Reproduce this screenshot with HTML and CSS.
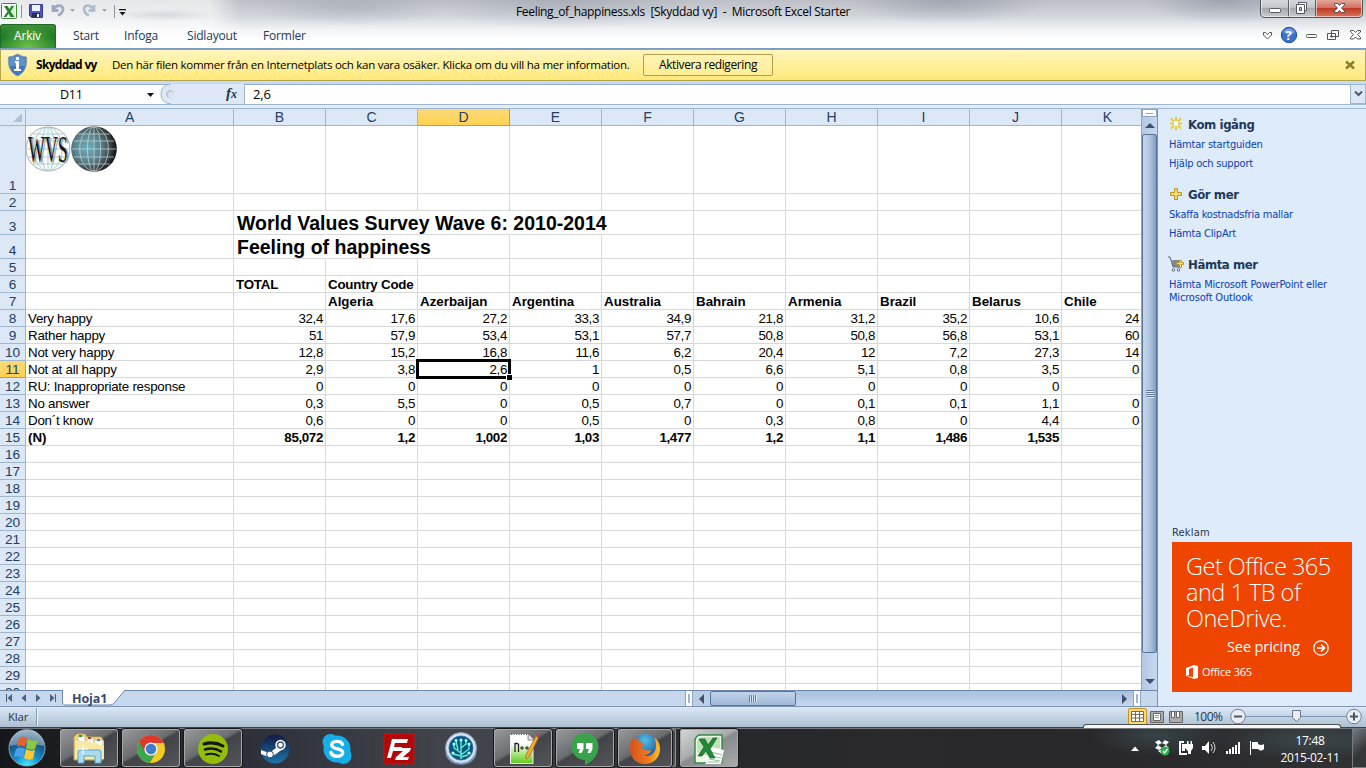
FILE: index.html
```html
<!DOCTYPE html>
<html lang="sv">
<head>
<meta charset="utf-8">
<title>Feeling_of_happiness.xls</title>
<link rel="stylesheet" href="styles.css">
</head>
<body>
<div class="app">
  <header class="chrome">
    <div class="titlebar">
      <svg class="quick" width="130" height="24" viewBox="0 0 130 24">
        <rect x="1.500" y="3.500" width="15" height="15" rx="1" fill="#fff" stroke="#3c8a3a"/><path d="M10 5h5v12h-5z" fill="#d9edd5"/><path d="M4 6h3.500l2 3 2-3h2.500l-3.500 5.500 4 5.500h-4l-2-3.500L6.500 17h-3l4-5.500z" fill="#25852f"/>
        <path d="M21.500 5v13M114.500 5v13" stroke="#8e949c"/>
        <path d="M29.500 4.500h13v13h-11l-2-2z" fill="#4a56b8" stroke="#353c93"/><path d="M32 5h8v6h-8z" fill="#eef2fc"/><path d="M32 13h8v4h-8z" fill="#272c58"/><path d="M37 14h2v3h-2z" fill="#fff"/>
        <path d="M53 5v5.500h5.500M54 9.500c2-5 9-5 9-.5 0 3-2 5-5 6.500" fill="none" stroke="#9dabc2" stroke-width="2.800"/>
        <path d="M94 5v5.500h-5.500M93 9.500c-2-5-9-5-9-.5 0 3 2 5 5 6.500" fill="none" stroke="#b0bccd" stroke-width="2.800"/>
        <path d="M70 9h5l-2.500 3zM102 9h5l-2.500 3z" fill="#a2a8b0"/>
        <path d="M119 9h7v1.200h-7zM119.500 12h6l-3 3.500z" fill="#111"/>
      </svg>
      <div class="title">Feeling_of_happiness.xls&nbsp; [Skyddad vy]&nbsp; -&nbsp; Microsoft Excel Starter</div>
      <svg class="winbtns" width="104" height="19" viewBox="0 0 104 19">
        <defs><linearGradient id="wb" x1="0" y1="0" x2="0" y2="1"><stop offset="0" stop-color="#d6d9dd"/><stop offset=".45" stop-color="#c3c6ca"/><stop offset=".5" stop-color="#a5a8ad"/><stop offset="1" stop-color="#c9ccd0"/></linearGradient>
        <linearGradient id="wr" x1="0" y1="0" x2="0" y2="1"><stop offset="0" stop-color="#e3a79b"/><stop offset=".45" stop-color="#d3705e"/><stop offset=".5" stop-color="#be3a25"/><stop offset="1" stop-color="#d9755c"/></linearGradient></defs>
        <path d="M.5-1v14q0 4.500 4.500 4.500h93q4.500 0 4.500-4.500v-14z" fill="url(#wb)" stroke="#50545a"/>
        <path d="M55.500 0h46.500v13q0 4-4 4H55.500z" fill="url(#wr)"/>
        <path d="M28.500 0v17M55.500 0v17" stroke="#5b5f66"/><path d="M1.500 0v13q0 3.500 3.500 3.500h93q3.500 0 3.500-3.500V0M29.500 0v16M56.500 0v16" fill="none" stroke="#fff" opacity=".55"/>
        <rect x="9.500" y="8.500" width="11" height="4" rx="1" fill="#fff" stroke="#555a62"/>
        <path d="M38.500 2.500h8v8h-8z" fill="#fff" stroke="#555a62"/><path d="M36.500 4.500h8v9h-8z" fill="#fff" stroke="#555a62"/><path d="M39.500 7.500h2v3h-2z" fill="#bbb" stroke="#555a62"/>
        <path d="M74.500 3.500h3l2 2 2-2h3v1.500l-3 3 3 3v1.500h-3l-2-2-2 2h-3V11l3-3-3-3z" fill="#fff" stroke="#594a50"/>
      </svg>
    </div>
    <nav class="tabs">
      <span class="tab file">Arkiv</span><span class="tab t1">Start</span><span class="tab t2">Infoga</span><span class="tab t3">Sidlayout</span><span class="tab t4">Formler</span>
      <svg class="mdi" width="104" height="22" viewBox="0 0 104 22">
        <path d="M2.500 8.500h2l2 2 2-2h2V11l-4 4-4-4z" fill="#fff" stroke="#555"/>
        <circle cx="28" cy="11" r="7.700" fill="#3c72cf" stroke="#244f9e"/><path d="M22 8a7 7 0 0 1 12 0q-5 5-12 0" fill="#739be2"/><text x="24.600" y="16" class="qmark">?</text>
        <rect x="45.500" y="10.500" width="10" height="3" rx="1" fill="#fff" stroke="#555"/>
        <path d="M70.500 6.500h7v6h-7zM66.500 9.500h8v6h-8z" fill="#fff" stroke="#555"/><path d="M69.500 12h2v1h-2z" fill="none" stroke="#555"/>
        <path d="M89.500 6.500h3l2 2 2-2h3v1.500l-3 2.500 3 3v1.500h-3l-2-2-2 2h-3V13.500l3-3-3-2.500z" fill="#fff" stroke="#555"/>
      </svg>
    </nav>
  </header>

  <section class="notice">
    <svg width="21" height="26" viewBox="0 0 21 26"><path d="M10.500 2q5 3 9 3c1 9-2 16-9 19-7-3-10-10-9-19q4 0 9-3z" fill="#3e78be" stroke="#8e9fae"/><path d="M10.500 3q4 2.500 8 3c.5 4 0 6-.6 8h-15C2 12 2 10 2.500 6q4-.5 8-3" fill="#5e90ca"/><path d="M8 9h4v8h2v2H7v-2h2v-6H8zM9 5h3v3H9z" fill="#fff"/></svg>
    <b>Skyddad vy</b>
    <span class="msg">Den här filen kommer från en Internetplats och kan vara osäker. Klicka om du vill ha mer information.</span>
    <span class="enable">Aktivera redigering</span>
    <svg class="nx" width="10" height="10" viewBox="0 0 10 10"><path d="M1 1.500l8 7M9 1.500l-8 7" stroke="#8c7c22" stroke-width="2.400"/></svg>
  </section>

  <section class="formula">
    <div class="namebox"><span>D11</span><svg width="7" height="4"><path d="M0 0h7L3.500 4z" fill="#111"/></svg></div>
    <div class="fxwrap"><svg width="84" height="20" viewBox="0 0 84 20"><path d="M84 0H11Q1 1 1 10t10 10h73z" fill="#dce8f6"/><path d="M11 0Q1 1 1 10t10 10" fill="none" stroke="#9fb4cf"/><circle cx="10" cy="10" r="4" fill="#bcc8d6"/><circle cx="11" cy="11" r="3" fill="#dde5ee"/><text x="66" y="14" class="fx">f</text><text x="71" y="14" class="fx small">x</text></svg></div>
    <div class="fval">2,6</div>
    <div class="fexp"><svg width="9" height="8"><path d="M1 1.500l3.500 3.500L8 1.500" fill="none" stroke="#4b5a70" stroke-width="2"/></svg></div>
  </section>
  <div class="gap"></div>

  <main class="work">
    <div class="left">
      <div class="sheetrow">
        <div class="sheet" id="sheet"></div>
        <div class="vscroll"><i class="split"></i><i class="up"></i><i class="thumb"><b></b></i><i class="down"></i></div>
      </div>
      <div class="bottom">
        <div class="nav"><svg width="62" height="15" viewBox="0 0 62 15"><g fill="#4b6080"><path d="M6 3h1v8H6zM12 3v8L7.500 7zM26 3v8l-4.500-4zM36 3v8l4.500-4zM50 3v8l4.500-4zM55 3h1v8h-1z"/></g></svg></div>
        <div class="stab"><svg width="64" height="16" viewBox="0 0 64 16"><path d="M.5 0v13l2 2H48q3 0 5-3L63 0" fill="#fff" stroke="#6d87aa"/><path d="M1 0h61" stroke="#fff"/></svg><span>Hoja1</span></div>
        <i class="hsplit"></i>
        <i class="hl"></i><i class="hthumb"><b></b></i><i class="htrack"></i><i class="hr"></i><i class="hsplit"></i><i class="corner"></i>
      </div>
    </div>
    <aside class="pane">
      <h3><svg width="14" height="14" viewBox="0 0 14 14"><path d="M7 0v4M7 9v4M1 6.500h4M9 6.500h4M2 1.500l3 3M12 1.500l-3 3M2 11.500l3-3M12 11.500l-3-3" stroke="#e3cf35" stroke-width="2"/><circle cx="7" cy="6.500" r="2" fill="#fff"/></svg>Kom igång</h3>
      <a>Hämtar startguiden</a><a>Hjälp och support</a>
      <h3><svg width="14" height="14" viewBox="0 0 14 14"><path d="M5.500 1.500h3v4h4v3h-4v4h-3v-4h-4v-3h4z" fill="#f6da63" stroke="#b8942f"/></svg>Gör mer</h3>
      <a>Skaffa kostnadsfria mallar</a><a>Hämta ClipArt</a>
      <h3><svg width="16" height="16" viewBox="0 0 16 16" class="cart"><path d="M0 1h2l3 10h7M3 5h8M4 7h7M4 9h7M6 4v7M8 4v7M10 4v7" fill="none" stroke="#596879"/><circle cx="5.500" cy="14" r="1.300" fill="#fff" stroke="#596879"/><circle cx="10.500" cy="14" r="1.300" fill="#fff" stroke="#596879"/><path d="M11.500 4.500h2v2h2v2h-2v3h-2v-3h-3v-2h3z" fill="#f6da63" stroke="#b8942f"/></svg>Hämta mer</h3>
      <a class="two">Hämta Microsoft PowerPoint eller<br>Microsoft Outlook</a>
      <div class="reklam">Reklam</div>
      <div class="ad">
        <p>Get Office 365<br>and 1 TB of<br>OneDrive.</p>
        <div class="see"><span>See pricing</span><svg width="16" height="16" viewBox="0 0 16 16"><circle cx="8" cy="8" r="7.200" fill="none" stroke="#fff" stroke-width="1.300"/><path d="M4 8h7M8 4.500L11.500 8 8 11.500" fill="none" stroke="#fff" stroke-width="1.700"/></svg></div>
        <div class="off"><svg width="12" height="14" viewBox="0 0 12 14"><path d="M0 3l8-3 4 1v12l-4 1-8-3 7 1V2.500L3 4v6l-3 1z" fill="#fff"/></svg><span>Office 365</span></div>
      </div>
    </aside>
  </main>

  <footer class="status">
    <span class="klar">Klar</span><i class="sep"></i>
    <div class="views">
      <span class="v on"><svg width="13" height="11"><path d="M.5.500h12v10H.500zM.5 3.500h12M.5 7h12M4.500 0v11M8.500 0v11" fill="#fff" stroke="#756a55"/></svg></span>
      <span class="v"><svg width="14" height="12"><path d="M.5.500h13v11H.500z" fill="#aaa" stroke="#666"/><path d="M3.500 2.500h7v7h-7z" fill="#fff" stroke="#666"/><path d="M5 4.500h4M5 6.500h4" stroke="#999"/></svg></span>
      <span class="v"><svg width="14" height="12"><path d="M.5.500h13v11H.500z" fill="#aaa" stroke="#666"/><path d="M2.500.500h3v6h-3zM7.500.500h3v6h-3z" fill="#fff" stroke="#666"/></svg></span>
    </div>
    <span class="pct">100%</span>
    <svg class="zoom" width="136" height="20" viewBox="0 0 136 20"><path d="M17 9.500h103" stroke="#7d93b2"/><g fill="#e8edf4" stroke="#717d8d"><circle cx="10" cy="9.500" r="7.300"/><circle cx="126" cy="9.500" r="7.300"/></g><path d="M6 9.500h8M122 9.500h8M126 5.500v8" stroke="#4e5661" stroke-width="2"/><path d="M64.500 3.500h8v7l-4 4-4-4z" fill="#e9eef5" stroke="#67778c"/></svg>
    <i class="tipedge"></i>
  </footer>

  <footer class="taskbar">
    <div class="slot start"><svg width="40" height="40" viewBox="0 0 40 40"><defs><radialGradient id="orb" cx=".5" cy="1" r=".95"><stop offset="0" stop-color="#4ff0ff"/><stop offset=".35" stop-color="#1594d2"/><stop offset=".75" stop-color="#184f80"/><stop offset="1" stop-color="#6f8fa8"/></radialGradient></defs><circle cx="20" cy="20" r="18" fill="url(#orb)" stroke="#8ea3b1"/><path d="M3 18a17 17 0 0 1 34 0q-17-5-34 0" fill="#c9dbe6" opacity=".45"/><path d="M12 10q4-3 8 0l-2 9q-4-3-8 0z" fill="#e8602a"/><path d="M21 11q4 3 10 1l-3 9q-5 2-9-1z" fill="#8dc63f"/><path d="M9 21q5-3 9 0l-2 9q-5-3-9-1z" fill="#4aa3e6"/><path d="M19 21q4 3 9 1l-2 9q-5 2-9-1z" fill="#fbc832"/></svg></div>
    <div class="slot open"><svg width="36" height="34" viewBox="0 0 36 34"><path d="M3 5l3-3h8l2 3h14l2 3v20H3z" fill="#edd98e" stroke="#c3a54c"/><path d="M4 9h29v18H4z" fill="#f8e9a6"/><path d="M7 9V4h7v5M16 9V6h7v5M23 10V8h9v6" fill="#fff" stroke="#d7bf70"/><path d="M8 3h3v2H8z" fill="#19a03b"/><path d="M17 5h3v2h-3z" fill="#d8382b"/><path d="M26 7h3v2h-3z" fill="#3a8bd8"/><path d="M7 31V20q0-2 2-2h19q2 0 2 2v11h-6v-7H13v7z" fill="#a9dcf3" stroke="#5aa0c6"/><path d="M12 13v9M8 17h9" stroke="#fff"/></svg></div>
    <div class="slot open"><svg width="30" height="30" viewBox="0 0 30 30"><circle cx="15" cy="15" r="14" fill="#f6ca26"/><path d="M15 15L3 7.800A14 14 0 0 0 14 29l6-11z" fill="#3aa74c"/><path d="M15 9h12.600A14 14 0 0 0 3 7.800L9 18z" fill="#dc3a2d"/><circle cx="15" cy="15" r="6.600" fill="#f3f3f3"/><circle cx="15" cy="15" r="5.200" fill="#3d7dcc"/></svg></div>
    <div class="slot open"><svg width="32" height="32" viewBox="0 0 32 32"><circle cx="16" cy="16" r="15" fill="#93bd0b"/><g fill="none" stroke="#15180d" stroke-linecap="round"><path d="M7 11q10-3 19 2" stroke-width="3"/><path d="M8 16.500q9-2.500 16 2" stroke-width="2.500"/><path d="M9 21.500q7-2 13 1.500" stroke-width="2"/></g></svg></div>
    <div class="slot"><svg width="30" height="30" viewBox="0 0 30 30"><defs><linearGradient id="st" x1="0" y1="0" x2="0" y2="1"><stop offset="0" stop-color="#121b42"/><stop offset="1" stop-color="#1c74ab"/></linearGradient></defs><circle cx="15" cy="15" r="14.500" fill="url(#st)"/><path d="M1 16l8 3 7-5 3-4 5 4-8 6-5 3-5-1-5-2z" fill="#fff"/><circle cx="20.500" cy="11" r="5.200" fill="#fff"/><circle cx="20.500" cy="11" r="3" fill="none" stroke="#39597e" stroke-width="1.300"/><circle cx="10" cy="20.500" r="3.400" fill="#fff" stroke="#214a78"/></svg></div>
    <div class="slot"><svg width="32" height="32" viewBox="0 0 32 32"><circle cx="16" cy="16" r="13.500" fill="#16aee8"/><circle cx="9.500" cy="9" r="8" fill="#16aee8"/><circle cx="22.500" cy="23" r="8" fill="#16aee8"/><path d="M21.500 11.500C20 7 10.500 7.500 10.700 12c.2 5 11 2.500 11 7.500 0 5-10.500 5-11.700 0" fill="none" stroke="#fff" stroke-width="3.400" stroke-linecap="round"/></svg></div>
    <div class="slot"><svg width="32" height="32" viewBox="0 0 32 32"><rect x="1" y="1" width="30" height="30" fill="#b30808" stroke="#bf1515" stroke-width="2" stroke-dasharray="1.500 1.500"/><path d="M9 6h16l-1 4H12l-1 4h8l-1 4h-8l-2 7H4zM16 15h12l-1 3-7 6h6l-1 3H12l1-3 7-6h-5z" fill="#fff"/></svg></div>
    <div class="slot"><svg width="34" height="34" viewBox="0 0 34 34"><ellipse cx="17" cy="20" rx="15.500" ry="13" fill="#7191ba"/><circle cx="17" cy="16" r="15.500" fill="#d4dfed" stroke="#8396b3"/><circle cx="17" cy="16" r="12" fill="#075682" stroke="#2873a3"/><path d="M17 27V8M17 21l-7-5v-4M17 23l8-6v-6M14 18l-2-9M17 16l5-4V8M17 24l-8-2M17 25l7-2" fill="none" stroke="#62eed4" stroke-width="1.400"/><g fill="#a0fff0"><circle cx="17" cy="8" r="1.600"/><circle cx="10" cy="12" r="1.600"/><circle cx="25" cy="12" r="1.600"/><circle cx="22" cy="8.500" r="1.400"/><circle cx="12" cy="8.500" r="1.400"/><circle cx="9" cy="21" r="1.600"/><circle cx="25" cy="21" r="1.600"/></g></svg></div>
    <div class="slot open"><svg width="34" height="34" viewBox="0 0 34 34"><defs><linearGradient id="np" x1="0" y1="0" x2="0" y2="1"><stop offset=".3" stop-color="#fff"/><stop offset="1" stop-color="#5dcc16"/></linearGradient></defs><path d="M4.500 2.500H22l5 5v24H4.500z" fill="url(#np)" stroke="#eee"/><path d="M5 2.500h18" stroke="#555" stroke-dasharray="1 1.500"/><path d="M22 3v5h5" fill="#ddd" stroke="#888"/><path d="M9 20V11.500h2.500l1 1V20" fill="none" stroke="#222" stroke-width="1.300"/><path d="M14 16h4M16 14v4M19 16h4M21 14v4" stroke="#222" stroke-width="1"/><path d="M30 4l2.500 1.500L23 25l-3 2v-4z" fill="#f1b02d" stroke="#a66b1b" stroke-width=".8"/><path d="M30 3l3-2 1 2-1.500 3z" fill="#b3434f"/></svg></div>
    <div class="slot open"><svg width="28" height="32" viewBox="0 0 28 32"><path d="M14 0a13.500 13.500 0 1 0 0 27v5q13-6 13.500-18A13.500 13.500 0 0 0 14 0" fill="#39a34b"/><path d="M6 10h6.500v6l-2 4H7.500l1.500-4H6zM15 10h6.500v6l-2 4h-3l1.500-4h-3z" fill="#fff"/></svg></div>
    <div class="slot open stack"><svg width="32" height="32" viewBox="0 0 32 32"><defs><radialGradient id="ffb" cx=".5" cy=".25" r=".7"><stop offset="0" stop-color="#55bfe8"/><stop offset="1" stop-color="#164d96"/></radialGradient><linearGradient id="ffo" x1="0" y1="0" x2="1" y2="0"><stop offset="0" stop-color="#d9501b"/><stop offset=".6" stop-color="#ee7a1e"/><stop offset="1" stop-color="#fbc02f"/></linearGradient></defs><circle cx="16" cy="14" r="13" fill="url(#ffb)"/><path d="M3 5q1 2 2 2 2-2 5-2-2 2-1 4 5 0 6 2-1 3-4 3l5 3q3 1 6 0-1 5-7 5c6 3 12-2 12-9 0-3 0-5-2-9 4 3 6 7 6 12 0 9-7 15-15 15S1 25 1 16q0-6 2-11z" fill="url(#ffo)"/></svg></div>
    <div class="slot open active"><svg width="32" height="32" viewBox="0 0 32 32"><path d="M2 7q1-5 6-5h21v28H2z" fill="#eef8ea" stroke="#388a43" stroke-width="1.500"/><path d="M4 8q1-4 5-4h18v11L16 23 4 19z" fill="#99d18b" opacity=".55"/><path d="M14 13l17 4-3 14H12l4-5z" fill="#fff"/><path d="M18 19l11 3M17 23l11 2M16 26l11 2M15 29h11" stroke="#8fc095"/><path d="M6 6h6l3 6 5-7h4l-7 11 5 9h-5l-4-7-4 5H5l6-9z" fill="#258838" stroke="#146328" stroke-width=".7"/></svg></div>
    <div class="tray"><svg width="150" height="20" viewBox="0 0 150 20"><path d="M4 12h8L8 7.500z" fill="#fff"/><g fill="#fff"><path d="M28 3l4-2 3 3-4 2zM35 4l3-3 4 2-3 3zM28 9l3-3 4 3-3 2zM35 9l4-3 3 3-4 2zM31 12l4-2 3 2-3 3z"/><circle cx="38" cy="12" r="4.500" fill="#2eaf45"/><path d="M36 12l1.500 2 3-4" fill="none" stroke="#fff" stroke-width="1.300"/><path d="M52 2h5v2h-3v10h6v2h-8zM55 5h3v7h-3z"/><path d="M58 5h2V2h1.500v3h2V2H65v3h1v4l-2 3v3h-3v-3l-3-3z"/></g><path d="M75 7h3l4-5v13l-4-4h-3z" fill="#fff"/><path d="M84 5q3 4 0 7M86 3q4 6 0 11" fill="none" stroke="#ddd"/><path d="M99 12h2v3h-2zM102 10h2v5h-2zM105 8h2v7h-2zM108 6h2v9h-2zM111 3h2v12h-2z" fill="#fff"/><path d="M123 2h1v14h-1zM125 3h6v2q3 2 6 0v5q-3 3-6 0h-6z" fill="#fff"/></svg></div>
    <div class="clock">17:48<br>2015-02-11</div>
    <i class="peek"></i>
  </footer>
</div>
<script src="sheet.js"></script>
</body>
</html>
```
FILE: styles.css
```css
* { box-sizing: border-box; }
body { margin: 0; overflow: hidden; font-family: "Open Sans", "Noto Sans", sans-serif; font-size: 12px; color: #000; }
i, b { font-style: normal; }
svg { display: block; flex: none; }
.app { width: 1366px; height: 768px; display: flex; flex-direction: column; background: #c6d9ee; overflow: hidden; }

.chrome { height: 49px; flex: none; border-bottom: 1px solid #7b9ac0;
  background:
    radial-gradient(ellipse 130px 30px at 560px 0, rgba(140,148,160,.4), transparent),
    radial-gradient(ellipse 100px 22px at 945px 2px, rgba(120,128,142,.4), transparent),
    radial-gradient(ellipse 80px 24px at 1225px 0, rgba(120,128,142,.45), transparent),
    radial-gradient(ellipse 100px 20px at 350px 6px, rgba(140,148,160,.35), transparent),
    radial-gradient(ellipse 50px 6px at 165px 15px, rgba(160,166,175,.3), transparent),
    linear-gradient(90deg, rgba(255,255,255,.65) 0, rgba(255,255,255,.6) 210px, transparent 240px),
    linear-gradient(#bcc0c6, #d3d7dc 35%, #f2f4f6 62%, #fff 85%); }
.titlebar { height: 24px; display: flex; align-items: flex-start; }
.title { width: 334px; margin-left: 386px; line-height: 24px; font-size: 12px; letter-spacing: -.33px; white-space: nowrap; }
.winbtns { margin-left: 410px; }
.tabs { height: 24px; display: flex; color: #1e395b; }
.tab { line-height: 24px; letter-spacing: -.2px; }
.file { width: 56px; padding-right: 1px; text-align: center; color: #fff; border: 1px solid #1c6b24; border-bottom: 0; border-radius: 3px 3px 0 0; background: radial-gradient(ellipse at 50% 100%, #6fc04a, transparent 75%), linear-gradient(#3b8c35, #1f7a25 55%, #2b8a2d); line-height: 22px; }
.t1 { margin-left: 17px; width: 51px; } .t2 { width: 63px; } .t3 { width: 76px; } .t4 { width: 60px; }
.tabs .mdi { margin: 0 1px 0 auto; }
.qmark { font: bold 13px "Open Sans", sans-serif; fill: #fff; }

.notice { height: 32px; flex: none; display: flex; align-items: center; border: 1px solid #b3a44e; background: linear-gradient(#fff5bd, #ffe97b); padding: 0 10px 1px 6px; white-space: nowrap; }
.notice b { margin-left: 8px; width: 76px; letter-spacing: -.75px; font-size: 12px; }
.notice b { letter-spacing: -.7px; }
.msg { width: 531px; letter-spacing: -.26px; font-size: 11.500px; }
.enable { width: 130px; height: 22px; margin-top: 1px; border: 1px solid #b39d4b; border-radius: 2px; text-align: center; line-height: 20px; letter-spacing: -.4px; background: linear-gradient(#fff3b5, #ffee94); }
.nx { margin-left: auto; }

.formula { height: 24px; flex: none; display: flex; background: #fff; border-top: 3px solid #c6dcf5; border-bottom: 1px solid #9eb6ce; box-shadow: inset 0 1px #93acc8; align-items: stretch; }
.namebox { width: 160px; display: flex; align-items: center; padding: 1px 6px 0 60px; justify-content: space-between; font-size: 12.500px; letter-spacing: -.2px; }
.fxwrap { width: 85px; border-right: 1px solid #9eb6ce; }
.fx { font: italic bold 15px "Liberation Serif", serif; fill: #26364d; }
.small { font-size: 12px; }
.fval { flex: 1; padding-left: 8px; line-height: 20px; font-size: 13px; letter-spacing: -.2px; }
.fexp { width: 16px; border: 1px solid #9eb6ce; background: #dce8f6; display: grid; place-items: center; }
.gap { height: 4px; flex: none; background: #e3edf9; border-bottom: 1px solid #9eb6ce; }

.work { height: 598px; flex: none; display: flex; }
.left { width: 1158px; display: flex; flex-direction: column; border-right: 1px solid #7c93b2; }
.sheetrow { height: 581px; display: flex; }
.sheet { width: 1141px; height: 581px; overflow: hidden; background: #fff; font-family: "Liberation Sans", Arial, sans-serif; font-size: 13.330px; }
.row { display: flex; width: 1154px; }
.row > div { width: 92px; flex: none; border-right: 1px solid #d6d8da; border-bottom: 1px solid #d6d8da; padding: 0 2px; display: flex; align-items: flex-end; line-height: 15px; white-space: nowrap; }
.row > .a { width: 208px; letter-spacing: -.25px; }
.row > .rh { width: 26px; background: #dce8f5; border-color: #9eb6ce; color: #263d66; justify-content: center; padding: 0; font-size: 13.700px; letter-spacing: -.2px; }
.row > .bold { font-weight: bold; letter-spacing: 0; }
.row > .tight { letter-spacing: -.22px; }
.row > .num { justify-content: flex-end; letter-spacing: -.35px; padding-right: 2px; }
.row > .cut { padding-right: 14px; }
.row > .open { border-right-color: transparent; overflow: visible; }
.row > .big { font-weight: bold; font-size: 19.500px; line-height: 21px; padding-left: 3px; }
.row > .pic { align-items: flex-start; padding: 0; }
.row > .sel { position: relative; }
.sel::before { content: ""; position: absolute; z-index: 1; inset: -2px; border: 3px solid #000; }
.sel::after { content: ""; position: absolute; z-index: 2; right: -3px; bottom: -3px; width: 5px; height: 5px; background: #000; border: solid #fff; border-width: 1px 0 0 1px; }
.heads > div { height: 17px; background: #dce8f5; border-color: #9eb6ce; color: #263d66; justify-content: center; font-size: 14px; align-items: center; }
.row > .hot { background: linear-gradient(#f9d978, #ffd154); border-color: #c39a4a; }
.heads > .rh svg { margin: 1px 0 0 9px; }
.wvs { font: 38px "Liberation Serif", serif; }

.vscroll { width: 16px; display: flex; flex-direction: column; background: linear-gradient(90deg, #b3c8e2, #c5d8ee); border-left: 1px solid #8da6c4; }
.split { height: 8px; border: 1px solid #8ea6c5; background: #fff; }
.split::before { content: ""; display: block; height: 1px; margin: 3px 3px; background: #9aa8bd; }
.up, .down { height: 17px; display: grid; place-items: center; }
.up::before { content: ""; border: 5px solid transparent; border-top: 0; border-bottom-color: #3e4f70; }
.down::before { content: ""; border: 5px solid transparent; border-bottom: 0; border-top-color: #3e4f70; }
.down { height: 37px; padding-top: 20px; }
.thumb { height: 520px; border: 1px solid #57749b; border-radius: 2px; background: linear-gradient(90deg, #c4d7ec, #aac0da 60%, #819dbf); display: grid; place-items: center; }
.thumb b { width: 8px; height: 8px; background: repeating-linear-gradient(#647b9c 0 1px, #d9e6f5 1px 2px); }
.bottom { height: 17px; display: flex; background: #c5d8ee; border-top: 1px solid #6d87aa; border-bottom: 1px solid #7c93b2; }
.nav { width: 62px; }
.stab { width: 64px; display: grid; margin-right: 559px; margin-top: -1px; }
.stab > * { grid-area: 1 / 1; }
.stab span { padding-left: 10px; font-weight: bold; line-height: 18px; color: #3b4969; font-size: 12.500px; letter-spacing: -.1px; }
.hsplit { width: 8px; background: #fff; border: 1px solid #8ea6c5; border-width: 0 1px; }
.hsplit::before { content: ""; display: block; width: 2px; height: 9px; margin: 3px 2px; background: #a5b6cf; }
.hl { width: 17px; display: grid; place-items: center; background: #bacee6; }
.hl::before { content: ""; border: 5px solid transparent; border-left: 0; border-right-color: #3e4f70; }
.hthumb { width: 86px; border: 1px solid #57749b; border-radius: 2px; background: linear-gradient(#c1d4eb, #9fb8d6); display: grid; place-items: center; }
.hthumb b { width: 8px; height: 7px; background: repeating-linear-gradient(90deg, #647b9c 0 1px, #d9e6f5 1px 2px); }
.htrack { width: 320px; background: linear-gradient(#a9c0dc, #c5d8ee); }
.hr { width: 17px; background: linear-gradient(#a9c0dc, #c5d8ee); display: grid; place-items: center; }
.hr::before { content: ""; border: 5px solid transparent; border-right: 0; border-left-color: #3e4f70; }

.pane { width: 208px; height: 598px; background: #deebfb; padding: 5px 0 0 11px; border-bottom: 1px solid #8397b2; display: flex; flex-direction: column; font-family: "DejaVu Sans Condensed", "DejaVu Sans", sans-serif; font-stretch: condensed; }
.pane h3 { margin: 0; height: 20px; display: flex; align-items: center; gap: 5px; font-size: 13px; color: #1e395b; letter-spacing: -.4px; }
.pane .cart { margin: 0 -1px 0 -1px; }
.pane a { height: 19px; line-height: 22px; font-size: 11px; letter-spacing: -.2px; color: #0b3fb5; white-space: nowrap; }
.pane a + h3 { margin-top: 12px; }
.pane .two { line-height: 13px; height: 27px; padding-top: 4px; letter-spacing: -.18px; }
.reklam { margin: 223px 0 0 3px; line-height: 17px; font-size: 11px; letter-spacing: .2px; color: #263852; }
.ad { margin: 1px 0 0 3px; width: 180px; height: 150px; background: #ee4500; color: #fff; padding: 11px 0 0 14px; font-family: "Open Sans", sans-serif; font-stretch: normal; }
.ad p { margin: 0; font-size: 23.500px; font-weight: 300; line-height: 26px; letter-spacing: -.5px; white-space: nowrap; }
.see { display: flex; align-items: center; margin-left: 41px; height: 30px; font-size: 14.500px; letter-spacing: -.1px; }
.see span { width: 86px; white-space: nowrap; }
.see svg { margin-top: 3px; }
.off { display: flex; align-items: center; gap: 4px; margin-top: 3px; font-size: 11px; letter-spacing: -.2px; }

.status { height: 21px; flex: none; position: relative; display: flex; align-items: center; background: linear-gradient(#dde8f6, #c2d3e4 50%, #aebfd1); color: #263852; font-size: 11.500px; border-bottom: 1px solid #38424c; padding-bottom: 1px; }
.klar { margin-left: 8px; width: 28px; letter-spacing: -.2px; }
.sep { width: 2px; height: 18px; background: linear-gradient(90deg, #8398b3 50%, #f3f7fb 50%); }
.views { display: flex; margin-left: 1090px; }
.v { width: 19px; height: 18px; display: grid; place-items: center; }
.v.on { border: 1px solid #c49331; border-radius: 2px; background: #ffd86f; }
.pct { margin-left: 9px; width: 34px; letter-spacing: -.5px; font-size: 12px; }
.tipedge { position: absolute; left: 1083px; top: 17px; width: 258px; height: 4px; background: #f5f5f5; border: 1px solid #4d5256; border-bottom: 0; border-radius: 3px 3px 0 0; }

.taskbar { height: 40px; flex: none; display: flex; background: radial-gradient(ellipse 70px 22px at 1155px 7px, rgba(80,115,120,.35), transparent), radial-gradient(ellipse 100px 20px at 1310px 12px, rgba(80,115,120,.35), transparent), linear-gradient(90deg, #15171a, #30333b 20%, #44464e 34%, #27282c 54%, #2a2a2c 65%, #28272a 80%, #303134); box-shadow: inset 0 1px #74777b; }
.slot { width: 62px; height: 40px; display: grid; place-items: center; padding: 1px 2px 0; }
.start { width: 58px; padding: 0 4px 0 0; }
.slot.open { position: relative; background: linear-gradient(150deg, #9a9b9d, #6b6c70 45%, #434449 50%, #55565a) 2px 1px / 58px 38px no-repeat; }
.slot.open::after { content: ""; position: absolute; inset: 1px 2px; border: 1px solid #a5a7a9; border-radius: 3px; box-shadow: 0 0 0 1px #17181a; }
.slot.active { background-image: linear-gradient(150deg, #d5d7d8, #a8aaac 45%, #898b8e 50%, #a9abad); }
.slot.stack { padding-right: 6px; }
.slot.stack::after { right: 6px; }
.stack::before { content: ""; position: absolute; inset: 1px 2px 1px auto; width: 4px; border: 1px solid #909294; border-left: 0; border-radius: 0 3px 3px 0; }
.tray { margin-left: 387px; width: 149px; padding-top: 11px; }
.clock { width: 68px; text-align: center; color: #fff; line-height: 17px; padding-top: 4px; letter-spacing: -.35px; white-space: nowrap; }
.peek { width: 14px; margin-left: auto; border: 1px solid #777b80; border-right: 0; background: linear-gradient(135deg, #777c80, #35383b 60%); }
```
FILE: sheet.js
```javascript
const heights = { 1: 68, 3: 24, 4: 24 };
const data = {
  6: ["", "TOTAL", "Country Code"],
  7: ["", "", "Algeria", "Azerbaijan", "Argentina", "Australia", "Bahrain", "Armenia", "Brazil", "Belarus", "Chile"],
  8: ["Very happy", "32,4", "17,6", "27,2", "33,3", "34,9", "21,8", "31,2", "35,2", "10,6", "24"],
  9: ["Rather happy", "51", "57,9", "53,4", "53,1", "57,7", "50,8", "50,8", "56,8", "53,1", "60"],
  10: ["Not very happy", "12,8", "15,2", "16,8", "11,6", "6,2", "20,4", "12", "7,2", "27,3", "14"],
  11: ["Not at all happy", "2,9", "3,8", "2,6", "1", "0,5", "6,6", "5,1", "0,8", "3,5", "0"],
  12: ["RU: Inappropriate response", "0", "0", "0", "0", "0", "0", "0", "0", "0", ""],
  13: ["No answer", "0,3", "5,5", "0", "0,5", "0,7", "0", "0,1", "0,1", "1,1", "0"],
  14: ["Don´t know", "0,6", "0", "0", "0,5", "0", "0,3", "0,8", "0", "4,4", "0"],
  15: ["(N)", "85,072", "1,2", "1,002", "1,03", "1,477", "1,2", "1,1", "1,486", "1,535", ""]
};
const meridians = (cx, r) => [0.3, 0.65].map(k => `<ellipse cx="${cx}" cy="23" rx="${r * k}" ry="${r}"/>`).join("") +
  `<path d="M${cx} 1v44M${cx - r} 23h${2 * r}M${cx - r + 2} 15h${2 * r - 4}M${cx - r + 2} 31h${2 * r - 4}M${cx - r + 6} 8h${2 * r - 12}M${cx - r + 6} 38h${2 * r - 12}"/>`;
const logo = `<svg width="92" height="47" viewBox="0 0 92 47"><defs><radialGradient id="gl" cx=".36" cy=".47" r=".64"><stop offset="0" stop-color="#6aaebd"/><stop offset=".45" stop-color="#5b858f"/><stop offset=".8" stop-color="#3b4144"/><stop offset="1" stop-color="#0d0e10"/></radialGradient></defs>
<circle cx="22" cy="23" r="22" fill="#fff" stroke="#a0adb2"/><g fill="none" stroke="#a8cdd3">${meridians(22, 21.5)}</g>
<g class="wvs" transform="translate(2 36) scale(.46 1)"><text x="4" y="1" fill="#9aa0a3" textLength="86" lengthAdjust="spacingAndGlyphs">WVS</text><text fill="#15191b" textLength="86" lengthAdjust="spacingAndGlyphs">WVS</text></g>
<circle cx="68" cy="23" r="22.800" fill="url(#gl)"/><g fill="none" stroke="#d0dadd" stroke-width=".9" opacity=".8">${meridians(68, 22)}</g></svg>`;

let html = `<div class="row heads"><div class="rh"><svg width="9" height="9"><path d="M9 0v9H0z" fill="#adc1dc"/></svg></div>` +
  [..."ABCDEFGHIJK"].map(c => `<div class="${c === "A" ? "a" : ""} ${c === "D" ? "hot" : ""}">${c}</div>`).join("") + `</div>`;
for (let r = 1; r <= 30; r++) {
  html += `<div class="row" style="height:${heights[r] || 17}px"><div class="rh ${r === 11 ? "hot" : ""}">${r}</div>`;
  for (let c = 0; c < 11; c++) {
    let cls = c ? "" : "a", text = (data[r] || [])[c] || "";
    if (r >= 8 && c) cls += " num";
    if (r >= 8 && c === 10) cls += " cut";
    if (r === 6 || r === 7 || r === 15) cls += " bold";
    if (r === 6) cls += " tight";
    if (r === 11 && c === 3) cls += " sel";
    if (r === 3 && c >= 1 && c <= 4) cls += " open";
    if (r === 4 && c >= 1 && c <= 2) cls += " open";
    if (c === 1 && r === 3) { cls += " big"; text = "World Values Survey Wave 6: 2010-2014"; }
    if (c === 1 && r === 4) { cls += " big"; text = "Feeling of happiness"; }
    if (c === 0 && r === 1) { cls += " pic"; text = logo; }
    html += `<div class="${cls}">${text}</div>`;
  }
  html += `</div>`;
}
document.getElementById("sheet").innerHTML = html;
```
